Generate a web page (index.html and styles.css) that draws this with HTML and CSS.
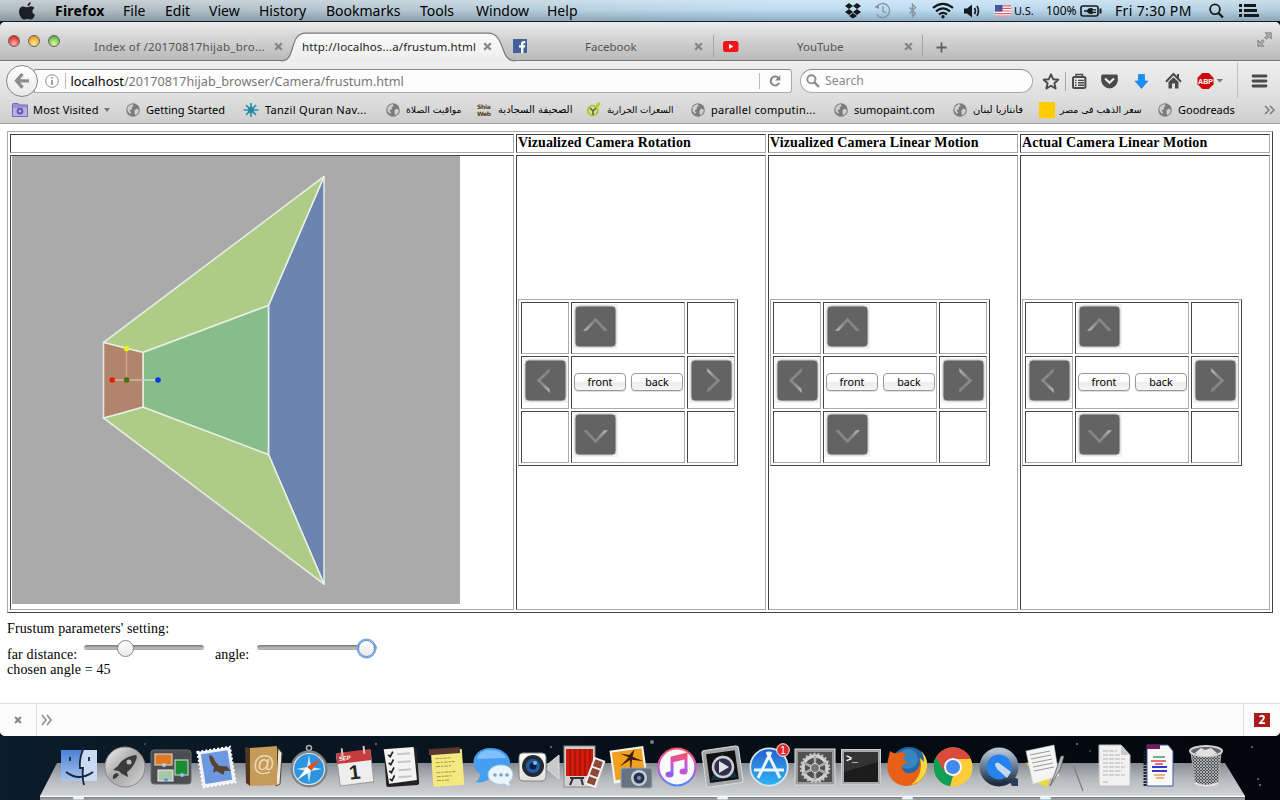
FILE: index.html
```html
<!DOCTYPE html>
<html lang="en">
<head>
<meta charset="utf-8">
<title>Frustum</title>
<link rel="stylesheet" href="styles.css">
</head>
<body>
<svg class="sprite" width="0" height="0">
  <defs>
    <linearGradient id="chev" x1="0" y1="1" x2="1" y2="0"><stop offset="0" stop-color="#b5b5b5"/><stop offset=".5" stop-color="#858585"/><stop offset="1" stop-color="#8f8f8f"/></linearGradient>
    <linearGradient id="silver" x1="0" y1="0" x2="1" y2="1"><stop offset="0" stop-color="#f4f4f4"/><stop offset=".5" stop-color="#a5a5a5"/><stop offset="1" stop-color="#dadada"/></linearGradient>
    <linearGradient id="blueV" x1="0" y1="0" x2="0" y2="1"><stop offset="0" stop-color="#2561cf"/><stop offset="1" stop-color="#30b4f5"/></linearGradient>
    <linearGradient id="paper" x1="0" y1="0" x2="0" y2="1"><stop offset="0" stop-color="#fff"/><stop offset="1" stop-color="#dedede"/></linearGradient>
  </defs>
  <symbol id="arrow" viewBox="0 0 45 45">
    <rect width="45" height="45" fill="#f2f2f2"/>
    <rect x="2" y="2" width="41" height="41" rx="4" fill="#636363" stroke="#c9c9c9" stroke-width="1"/>
    <path d="M10 26.7 L22.5 13.7 L35 26.7 H31 L22.5 17.6 L14 26.7Z" fill="url(#chev)"/>
  </symbol>
  <symbol id="x" viewBox="0 0 9 9"><path d="M1.2 1.2 L7.8 7.8 M7.8 1.2 L1.2 7.8" stroke="#858585" stroke-width="2.3"/></symbol>
  <symbol id="globe" viewBox="0 0 14 14"><circle cx="7" cy="7" r="6.8" fill="#7c7c7c"/><path d="M1.5 4.5 Q3.5 1.5 6.5 1 L7.5 3 L5.5 4.5 L6 6 L3.5 7.5 L5 9.5 L4 11 L1.5 8Z M8.5 7.5 L10.5 5.5 L13 7 L12 10 L9.5 12.5 L8.5 10Z" fill="#cfcfcf"/></symbol>
</svg>

<header class="menubar">
  <svg class="apple" width="18" height="20" viewBox="0 0 18 20"><path d="M12.7 1 Q13 4 9.6 5.3 Q9.1 2.2 12.7 1 M9.2 6.2 C10.7 6.2 11.5 5.3 13 5.3 C14.6 5.3 15.8 6 16.4 7 C13.4 8.8 14 12.7 17 13.8 C16 16.5 14.5 18.6 12.9 18.6 C11.6 18.6 11 17.9 9.5 17.9 C8 17.9 7.3 18.6 6 18.6 C3.8 18.6 1 14.4 1 10.6 C1 7.1 3.2 5.4 5.3 5.4 C6.9 5.4 7.9 6.2 9.2 6.2Z" fill="#1b1f23"/></svg>
  <nav class="menus">
    <b class="m1">Firefox</b><span class="m2">File</span><span class="m3">Edit</span><span class="m4">View</span><span class="m5">History</span><span class="m6">Bookmarks</span><span class="m7">Tools</span><span class="m8">Window</span><span class="m9">Help</span>
  </nav>
  <svg class="status" width="168" height="22" viewBox="0 0 168 22">
    <path d="M5 3 L9 6 L5 9 L1 6Z M13 3 L17 6 L13 9 L9 6Z M5 9 L9 12 L5 15 L1 12Z M13 9 L17 12 L13 15 L9 12Z M9 13 L13 16 L9 18.5 L5 16Z" fill="#16191c"/>
    <g stroke="#8795a0" fill="none" stroke-width="1.4"><path d="M32.6 7 A7 7 0 1 1 32.5 14"/><path d="M30 7 L35 9 L35 4.5Z" fill="#8795a0" stroke="none"/><path d="M39 6 V11 L42.5 13"/><path d="M65.5 7.5 L71.5 13.5 L68.5 16.5 V4.5 L71.5 7.5 L65.5 13.5"/></g>
    <g stroke="#16191c" fill="none" stroke-width="2.2"><path d="M89 7.8 Q99 -.2 109 7.8"/><path d="M92 11.3 Q99 5.5 106 11.3"/><path d="M95 14.4 Q99 11.4 103 14.4"/></g><circle cx="99" cy="16.8" r="1.7" fill="#16191c"/>
    <path d="M120 8.5 H123 L128 4.5 V17.5 L123 13.5 H120Z" fill="#16191c"/><g stroke="#16191c" stroke-width="1.6" fill="none"><path d="M130.5 8 Q132.5 11 130.5 14 M133 6 Q136 11 133 16"/></g>
    <g transform="translate(151 5)"><rect width="16" height="11.5" fill="#fff"/><path d="M0 .8H16M0 3.4H16M0 6H16M0 8.6H16M0 11H16" stroke="#dc5b68" stroke-width="1.2"/><rect width="7.5" height="6.5" fill="#46569c"/></g>
  </svg>
  <span class="us">U.S.</span><span class="pct">100%</span>
  <svg class="battery" width="23" height="22" viewBox="0 0 23 22"><rect x="1" y="6" width="17" height="10" rx="2" fill="none" stroke="#16191c" stroke-width="1.6"/><path d="M19.5 8.5 H21.5 V13.5 H19.5Z M4 10.3 H7 Q8 8 11 8 H12.5 V9.3 H16 V10.5 H12.5 V11.7 H16 V13 H12.5 V14 H11 Q8 14 7 11.8 H4Z" fill="#16191c"/></svg>
  <span class="clock">Fri 7:30 PM</span>
  <svg class="spot" width="56" height="22" viewBox="0 0 56 22"><circle cx="7" cy="9.3" r="4.9" fill="none" stroke="#16191c" stroke-width="1.8"/><path d="M10.5 13 L15 17.5" stroke="#16191c" stroke-width="2.2"/><path d="M31 5.5H34M36 5.5H48M31 10.5H34M36 10.5H49M31 15.5H34M36 15.5H51" stroke="#16191c" stroke-width="3"/></svg>
</header>

<main class="window">
  <div class="tabs">
    <div class="lights"><i class="red"></i><i class="amber"></i><i class="green"></i></div>
    <div class="tab first"><span>Index of /20170817hijab_bro...</span><svg width="9" height="9"><use href="#x"/></svg></div>
    <div class="tab active">
      <svg class="shape" width="238" height="30" viewBox="0 0 238 30" preserveAspectRatio="none"><defs><linearGradient id="tg" x1="0" y1="0" x2="0" y2="1"><stop offset="0" stop-color="#fbfbfb"/><stop offset="1" stop-color="#ececec"/></linearGradient></defs><path d="M4 30 V29.2 C20 29 11 1.2 29 1.2 H211 C229 1.2 222 29 238 29.2 V30Z" fill="url(#tg)"/><path d="M4 29 C20 29 11 1.2 29 1.2 H211 C229 1.2 222 29 238 29" fill="none" stroke="#7a7a7a" stroke-width="1.2"/></svg>
      <span>http://localhos...a/frustum.html</span><svg class="close" width="9" height="9"><use href="#x"/></svg>
    </div>
    <div class="tab fb"><svg width="14" height="14" viewBox="0 0 14 14"><rect width="14" height="14" fill="#43609c"/><path d="M8 14V8.5H6V6.2H8V4.8Q8 2 10.8 2H12.3V4.2H11.2Q10.4 4.2 10.4 5V6.2H12.3L12 8.5H10.4V14Z" fill="#fff"/></svg><span>Facebook</span><svg width="9" height="9"><use href="#x"/></svg></div>
    <div class="tab yt"><svg width="16" height="11" viewBox="0 0 16 11"><rect width="15.5" height="11" rx="2.5" fill="#f8131b"/><path d="M6 3 L10.5 5.5 L6 8Z" fill="#fff"/></svg><span>YouTube</span><svg width="9" height="9"><use href="#x"/></svg></div>
    <div class="plus"><svg width="11" height="11"><path d="M5.5 .5V10.5M.5 5.5H10.5" stroke="#626262" stroke-width="1.8"/></svg></div>
    <svg class="full" width="15" height="15" viewBox="0 0 15 15"><path d="M8 .8H14.3V7L12 4.8L9.3 7.3L7.5 5.6L10.3 3ZM.8 8V14.3H7L4.8 12L7.3 9.3L5.6 7.5L3 10.3Z" fill="#a9a9a9" stroke="#777" stroke-width=".7"/></svg>
  </div>

  <div class="nav">
    <div class="back"><svg width="16" height="16" viewBox="0 0 16 16"><path d="M8.5 1 L2.5 7.8 L8.5 14.6 M3 7.8 H15" fill="none" stroke="#8d8d8d" stroke-width="3.3"/></svg></div>
    <div class="url">
      <svg width="14" height="14" viewBox="0 0 14 14"><circle cx="7" cy="7" r="6.3" fill="none" stroke="#8c8c8c"/><path d="M7 3V4.6M7 6V11" stroke="#808080" stroke-width="1.5"/></svg>
      <i class="rule"></i><span class="addr"><em>localhost</em>/20170817hijab_browser/Camera/frustum.html</span>
      <i class="rule"></i><svg class="reload" width="12" height="12" viewBox="0 0 12 12"><path d="M9.4 3 A4.4 4.4 0 1 0 10.2 7.8" fill="none" stroke="#858585" stroke-width="2"/><path d="M11.3 .2V5.4H6Z" fill="#858585"/></svg>
    </div>
    <div class="search"><svg width="14" height="14" viewBox="0 0 14 14"><circle cx="5.4" cy="5.3" r="4.1" fill="none" stroke="#8c8c8c" stroke-width="1.9"/><path d="M8.3 8.3 L13 13" stroke="#8c8c8c" stroke-width="2.4"/></svg><span>Search</span></div>
    <svg class="tools" width="238" height="38" viewBox="0 0 238 38">
      <path d="M9 12.3 L11.2 17.2 L16.3 17.7 L12.4 21.2 L13.6 26.5 L9 23.8 L4.4 26.5 L5.6 21.2 L1.7 17.7 L6.8 17.2Z" fill="none" stroke="#4a4a4a" stroke-width="1.9" stroke-linejoin="round"/>
      <path d="M23.5 10V29" stroke="#aaa"/>
      <rect x="31" y="15" width="12.4" height="11" rx="1.5" fill="none" stroke="#4a4a4a" stroke-width="2"/><path d="M34 14V12.5H40.5V14M33 18.4H34.5M36 18.4H42M33 20.8H34.5M36 20.8H42M33 23.2H34.5M36 23.2H42" fill="none" stroke="#4a4a4a" stroke-width="1.4"/>
      <path d="M60.5 12.5H74.5Q75.8 12.5 75.8 14V19Q74.5 25.5 67.6 26.5Q60.5 25.5 59.2 19V14Q59.2 12.5 60.5 12.5Z" fill="#4a4a4a"/><path d="M63 16.5L67.5 20.7L72 16.5" stroke="#eee" fill="none" stroke-width="2.1"/>
      <path d="M96.5 12.5H102.5V19H106L99.5 26.5L93 19H96.5Z" fill="#1791f5" stroke="#0873d5" stroke-width=".6"/>
      <path d="M124 19.8L131.5 12L139 19.8" fill="none" stroke="#4a4a4a" stroke-width="2"/><path d="M126.5 20L131.5 15.2L136.5 20V26.5H133V21.5H130V26.5H126.5ZM135 12H137V16H135Z" fill="#4a4a4a"/>
      <path d="M160.2 11H166.8L171.5 15.7V22.3L166.8 27H160.2L155.5 22.3V15.7Z" fill="#cc0808"/><text x="163.5" y="21.8" text-anchor="middle" class="abp">ABP</text>
      <path d="M174.5 17H181L177.8 20.6Z" fill="#777"/><path d="M195.5 0V36" stroke="#c2c2c2"/>
      <path d="M211 14H224M211 19H224M211 24H224" stroke="#4a4a4a" stroke-width="2.8" stroke-linecap="round"/>
    </svg>
  </div>

  <div class="bookmarks">
    <span class="bm b1"><svg width="16" height="14" viewBox="0 0 16 14"><path d="M.5 13.5V1.5Q.5.5 1.5.5H6L7 2H15.5V13.5Z" fill="#9c93d4" stroke="#7167b4"/><path d="M1 5H15V13H1Z" fill="#b9b2e6"/><circle cx="8" cy="8.2" r="2.4" fill="none" stroke="#6459ac" stroke-width="2"/></svg><span>Most Visited</span><i></i></span>
    <span class="bm b2"><svg width="14" height="14"><use href="#globe"/></svg><span>Getting Started</span></span>
    <span class="bm b3"><svg width="16" height="14" viewBox="0 0 16 14"><path d="M8 0V14M.5 7H15.5M3 2.2L13 11.8M13 2.2L3 11.8" stroke="#2e91ae" stroke-width="1.7"/><circle cx="8" cy="7" r="3.1" fill="#2788a6"/></svg><span>Tanzil Quran Nav...</span></span>
    <span class="bm b4"><svg width="14" height="14"><use href="#globe"/></svg><span class="ar">مواقيت الصلاة</span></span>
    <span class="bm b5"><b class="shia">Shia<br>Web</b><span class="ar">الصحيفة السجادية</span></span>
    <span class="bm b6"><svg width="14" height="15" viewBox="0 0 14 15"><circle cx="5.8" cy="8.5" r="5" fill="#cfe09e" stroke="#a8c21e" stroke-width="1.6"/><path d="M9 5Q8 1 12.5 0Q14 3.5 10 5.5" fill="#b4d01d"/><path d="M6 13V9L3 6M6 9L9 6" stroke="#517035" stroke-width="1.6" fill="none"/></svg><span class="ar">السعرات الحرارية</span></span>
    <span class="bm b7"><svg width="14" height="14"><use href="#globe"/></svg><span>parallel computin...</span></span>
    <span class="bm b8"><svg width="14" height="14"><use href="#globe"/></svg><span>sumopaint.com</span></span>
    <span class="bm b9"><svg width="14" height="14"><use href="#globe"/></svg><span class="ar">فانتازيا لبنان</span></span>
    <span class="bm b10"><b class="gold"></b><span class="ar">سعر الذهب فى مصر</span></span>
    <span class="bm b11"><svg width="14" height="14"><use href="#globe"/></svg><span>Goodreads</span></span>
    <svg class="more" width="12" height="10"><path d="M1 1L5 5L1 9M6 1L10 5L6 9" fill="none" stroke="#7c7c7c" stroke-width="1.5"/></svg>
  </div>

  <section class="page">
    <div class="grid">
      <div class="cell"></div>
      <div class="cell th t1">Vizualized Camera Rotation</div>
      <div class="cell th t2">Vizualized Camera Linear Motion</div>
      <div class="cell th t3">Actual Camera Linear Motion</div>
      <div class="cell view">
        <svg width="448" height="448" viewBox="12 156 448 448">
          <rect x="12" y="156" width="448" height="448" fill="#aaa"/>
          <g stroke="#edf5ea" stroke-opacity=".85" stroke-width="1.6" stroke-linejoin="round">
            <path d="M324 176.5L268.5 305.5V454.5L324 584Z" fill="#6c84b0"/>
            <path d="M103.5 342.5L324 176.5L268.5 305.5L143 352.5Z" fill="#afcb88"/>
            <path d="M103.5 418L324 584L268.5 454.5L143 407Z" fill="#afcb88"/>
            <path d="M143 352.5L268.5 305.5V454.5L143 407Z" fill="#89bc8b"/>
            <path d="M103.5 342.5L143 352.5V407L103.5 418Z" fill="#b1846c"/>
          </g>
          <path d="M126.5 348V380" stroke="#cfa890" stroke-width="1.4"/><path d="M112 380H143" stroke="#d8b5a2" stroke-width="1.4"/><path d="M143 380H158" stroke="#bfe6bd" stroke-width="1.4"/>
          <circle cx="126.6" cy="348.6" r="2.8" fill="#f0ee1c"/><circle cx="112.2" cy="380" r="2.8" fill="#e81c05"/><circle cx="126.6" cy="380" r="2.8" fill="#4e6d10"/><circle cx="158" cy="380" r="2.8" fill="#0838e0"/>
        </svg>
      </div>
      <div class="cell mid"><div class="pad">
        <div></div><div class="up"><svg><use href="#arrow"/></svg></div><div></div>
        <div class="left"><svg><use href="#arrow"/></svg></div><div class="btns"><button>front</button><button>back</button></div><div class="right"><svg><use href="#arrow"/></svg></div>
        <div></div><div class="down"><svg><use href="#arrow"/></svg></div><div></div>
      </div></div>
      <div class="cell mid"><div class="pad">
        <div></div><div class="up"><svg><use href="#arrow"/></svg></div><div></div>
        <div class="left"><svg><use href="#arrow"/></svg></div><div class="btns"><button>front</button><button>back</button></div><div class="right"><svg><use href="#arrow"/></svg></div>
        <div></div><div class="down"><svg><use href="#arrow"/></svg></div><div></div>
      </div></div>
      <div class="cell mid"><div class="pad">
        <div></div><div class="up"><svg><use href="#arrow"/></svg></div><div></div>
        <div class="left"><svg><use href="#arrow"/></svg></div><div class="btns"><button>front</button><button>back</button></div><div class="right"><svg><use href="#arrow"/></svg></div>
        <div></div><div class="down"><svg><use href="#arrow"/></svg></div><div></div>
      </div></div>
    </div>
    <div class="setting">Frustum parameters' setting:</div>
    <div class="sliders">
      <label class="far">far distance:</label><span class="slider"><i class="s1"></i></span>
      <label class="ang">angle:</label><span class="slider"><i class="s2"></i></span>
    </div>
    <div class="chosen">chosen angle = 45</div>
  </section>

  <footer class="console">
    <div class="cx"><svg width="8" height="8"><use href="#x"/></svg></div>
    <svg class="prompt" width="12" height="12"><path d="M1 1L5 6L1 11M6 1L10 6L6 11" fill="none" stroke="#888" stroke-width="1.5"/></svg>
    <div class="errors"><b>2</b></div>
  </footer>
</main>

<footer class="dock">
  <svg class="shelf" width="1280" height="64" viewBox="0 736 1280 64">
    <defs><linearGradient id="sh" x1="0" y1="0" x2="0" y2="1"><stop offset="0" stop-color="#858b91"/><stop offset=".5" stop-color="#b7babd"/><stop offset="1" stop-color="#d2d3d5"/></linearGradient></defs>
    <g fill="#6f7e88"><circle cx="145" cy="744" r=".8"/><circle cx="376" cy="744" r="1"/><circle cx="551" cy="747" r="1"/><circle cx="652" cy="742" r="2"/><circle cx="1077" cy="744" r="1.1"/><circle cx="1090" cy="751" r=".8"/><circle cx="1252" cy="747" r="1"/><circle cx="1258" cy="779" r="1"/><circle cx="1260" cy="785" r="1.1"/></g>
    <path d="M57 763H1225L1245 796H40Z" fill="url(#sh)"/><path d="M40 797.5H1245V800H40Z" fill="#999da0"/><path d="M40 796.5H1245" stroke="#fff" stroke-width="1.5"/>
    <g fill="#e4f7ff"><rect x="73" y="797" width="11" height="2.5" rx="1"/><rect x="717" y="797" width="11" height="2.5" rx="1"/><rect x="902" y="797" width="11" height="2.5" rx="1"/><rect x="1040" y="797" width="11" height="2.5" rx="1"/></g>
    <path d="M1074 767L1083 791" stroke="#7c7c7c" stroke-width="1.3"/>
  </svg>
  <div class="icons">
    <svg viewBox="0 0 46 64"><defs><linearGradient id="fi" x1="0" y1="0" x2="0" y2="1"><stop offset="0" stop-color="#4a7fd6"/><stop offset="1" stop-color="#a9c7ef"/></linearGradient></defs><rect x="5" y="14" width="36" height="31" fill="url(#fi)"/><path d="M28 14H41V45H27L26 32H23Q24 22 28 14Z" fill="#c8dbf3"/><path d="M28 11Q23 22 24 32H27Q26 41 28 49M10 36Q23 46 37 36M14 21V25M33 21V25" fill="none" stroke="#18243a" stroke-width="1.8"/></svg>
    <svg viewBox="0 0 46 64"><circle cx="23" cy="31" r="20" fill="url(#silver)" stroke="#888"/><path d="M33 19Q36 19 34 24Q31 32 25 36L26 41L20 38L17 35L11 34L16 30Q21 21 33 19ZM15 37Q10 38 11 43Q15 42 17 39" fill="#3a3b3c"/><circle cx="27" cy="26" r="2.5" fill="#bbb"/></svg>
    <svg viewBox="0 0 46 64"><rect x="3" y="14" width="40" height="34" rx="3" fill="#4c4d50" stroke="#696a6e"/><rect x="7" y="18" width="17" height="11" fill="#e07a22" stroke="#ddd"/><rect x="27" y="24" width="13" height="15" fill="#198d32" stroke="#ddd"/><rect x="10" y="34" width="15" height="11" fill="#a6c8a6" stroke="#eee"/><circle cx="16" cy="29" r="2" fill="#b8cbe2"/><circle cx="34" cy="39" r="2" fill="#9ac0ef"/><circle cx="18" cy="44" r="2" fill="#589be0"/></svg>
    <svg viewBox="0 0 46 64"><g transform="rotate(-9 23 31)"><rect x="6" y="13" width="33" height="36" fill="#f2f2f2" stroke="#fff" stroke-width="2" stroke-dasharray="2 2"/><rect x="9" y="16" width="27" height="30" fill="#6b98df"/><path d="M17 18Q21 19 22 25L25 30L33 32L36 37L30 36L28 40L22 35L18 36L20 31Q16 25 17 18Z" fill="#594330"/></g></svg>
    <svg viewBox="0 0 46 64"><path d="M5 11L10 12V50L6 47Z" fill="#543720"/><path d="M38 12L42 17L40 48L36 50Z" fill="#eee9dd" stroke="#5d422c"/><path d="M10 12L37 10V49L10 50Z" fill="#c69a57"/><text x="24" y="35" text-anchor="middle" class="at">@</text></svg>
    <svg viewBox="0 0 46 64"><circle cx="23" cy="12" r="2.5" fill="none" stroke="#aaa" stroke-width="1.5"/><circle cx="23" cy="33" r="17" fill="#2c94df" stroke="#7f8488" stroke-width="3"/><circle cx="23" cy="33" r="15.5" fill="none" stroke="#dfe4e6" stroke-width="1.2"/><path d="M23 19L25 31L36 33L25 35L23 47L21 35L10 33L21 31Z" fill="#c6e8f8"/><path d="M35 22L25 35L21 31Z" fill="#ee4b19"/><path d="M11 44L21 31L25 35Z" fill="#fff"/></svg>
    <svg viewBox="0 0 46 64"><g transform="rotate(-7 23 31)"><rect x="6" y="16" width="34" height="32" fill="#eee" stroke="#999"/><rect x="6" y="15" width="34" height="11" fill="#c53c3e"/><text x="8" y="23" class="sep">SEP</text><text x="22" y="43" text-anchor="middle" class="one">1</text><path d="M12 11V19M34 11V19" stroke="#ccc" stroke-width="2"/></g></svg>
    <svg viewBox="0 0 46 64"><g transform="rotate(-4 23 31)"><rect x="7" y="13" width="33" height="37" rx="2" fill="#222"/><path d="M7 12H37L38 45L10 47Z" fill="#f3f3f3"/><path d="M11 18L13 20L16 15M11 26L13 28L16 23M11 34L13 36L16 31M11 42L13 44L16 39" fill="none" stroke="#222" stroke-width="1.7"/><path d="M20 18H33M20 26H33M20 34H33M20 41H33" stroke="#c5c5c5" stroke-width="2"/></g></svg>
    <svg viewBox="0 0 46 64"><g transform="rotate(-4 23 31)"><rect x="8" y="14" width="31" height="36" fill="#f3e980"/><rect x="6" y="12" width="31" height="6" fill="#5c3730"/><path d="M12 22H27M12 26H31M12 30H28M12 36H31M12 40H27M12 44H25" stroke="#a69a4c" stroke-width="1.1" stroke-dasharray="4 1 2 1"/></g></svg>
    <svg viewBox="0 0 46 64"><path d="M20 12C31 12 40 18 40 27C40 36 31 41 23 40Q15 48 5 46Q10 44 10 38C-3 28 5 12 20 12Z" fill="#459ef0"/><path d="M7 23Q9 14 20 14Q32 14 36 22Z" fill="#7fc1fa"/><path d="M31 29C38 29 43 33 43 39Q43 43 39 46L41 51Q37 50 34 48C25 50 18 44 18 39C18 33 24 29 31 29Z" fill="#eaf5fb" stroke="#a8c9de"/><g fill="#7ca3c5"><circle cx="25" cy="39" r="1.8"/><circle cx="31" cy="39" r="1.8"/><circle cx="37" cy="39" r="1.8"/></g></svg>
    <svg viewBox="0 0 46 64"><rect x="3" y="17" width="27" height="28" rx="4" fill="url(#paper)" stroke="#888"/><path d="M32 28L43 19V43L32 34Z" fill="#c9c9c9" stroke="#ddd"/><circle cx="17" cy="30" r="11" fill="#252a2e"/><circle cx="17" cy="30" r="7" fill="#1d5ca6"/><circle cx="17" cy="30" r="3.5" fill="#0a1f45"/><circle cx="19" cy="27" r="2" fill="#83b9e8"/></svg>
    <svg viewBox="0 0 46 64"><rect x="2" y="10" width="31" height="41" fill="#d2d2d2" stroke="#888"/><rect x="4" y="13" width="27" height="27" fill="#d31b0b"/><path d="M8 13V40M13 13V40M18 13V40M23 13V40M28 13V40" stroke="#98140b" stroke-width="1.4"/><path d="M8 42H22M11 42L8 49M19 42L21 49" stroke="#333" stroke-width="2"/><g transform="rotate(20 33 36)"><rect x="27" y="22" width="12" height="29" fill="#f2f2f2"/><path d="M29 24H37V31H29ZM29 33H37V40H29ZM29 42H37V49H29Z" fill="#8d4839"/></g></svg>
    <svg viewBox="0 0 46 64"><g transform="rotate(-8 23 31)"><rect x="4" y="12" width="34" height="33" fill="#f5f5f5"/><rect x="6" y="14" width="30" height="28" fill="#f3a11d"/><path d="M21 42L23 24L12 29L22 21L14 16L23 19L29 14L26 21L36 27L25 24Z" fill="#3d210b"/></g><rect x="13" y="32" width="31" height="20" rx="2" fill="#667381" stroke="#9da7b1"/><circle cx="31" cy="42" r="8" fill="#c7ced3"/><circle cx="31" cy="42" r="5.5" fill="#26344a"/><circle cx="31" cy="42" r="2" fill="#6f91be"/></svg>
    <svg viewBox="0 0 46 64"><defs><linearGradient id="it" x1="0" y1="0" x2="0" y2="1"><stop offset="0" stop-color="#fa5163"/><stop offset=".5" stop-color="#d351d8"/><stop offset="1" stop-color="#4d8cfa"/></linearGradient></defs><circle cx="23" cy="31" r="18.5" fill="#fafafa" stroke="url(#it)" stroke-width="2.2"/><path d="M18 38V22L32 18.5V35M18 25L32 21.5" fill="none" stroke="url(#it)" stroke-width="3"/><ellipse cx="15.5" cy="38.5" rx="4" ry="3" fill="#9a5cec"/><ellipse cx="29.5" cy="35.5" rx="4" ry="3" fill="#c253dc"/></svg>
    <svg viewBox="0 0 46 64"><g transform="rotate(-8 23 31)"><rect x="4" y="12" width="37" height="37" rx="3" fill="#a6a7a8" stroke="#ddd"/><rect x="8" y="16" width="29" height="29" fill="#111"/><path d="M9 43L24 17L36 43Z" fill="#194f70" opacity=".55"/></g><circle cx="23" cy="31" r="10" fill="#30314e" stroke="#cfcfd6" stroke-width="2.5"/><path d="M19 25L29 31L19 37Z" fill="#e5e5e8"/></svg>
    <svg viewBox="0 0 46 64"><circle cx="23" cy="31" r="18.7" fill="url(#blueV)" stroke="#dce5ec" stroke-width="1.8"/><path d="M25 16L12 42M21 16L34 42M8 34H38" fill="none" stroke="#e9f5fa" stroke-width="3"/><circle cx="37" cy="14" r="6.3" fill="#dc272b" stroke="#fff"/><text x="37" y="18" text-anchor="middle" class="badge">1</text></svg>
    <svg viewBox="0 0 46 64"><rect x="3" y="13" width="40" height="36" fill="#9b9b9b" stroke="#ddd"/><rect x="6" y="16" width="34" height="30" fill="#505050"/><circle cx="23" cy="32" r="12" fill="none" stroke="#d0d0d0" stroke-width="3.5"/><circle cx="23" cy="32" r="14" fill="none" stroke="#c5c5c5" stroke-width="2.5" stroke-dasharray="2 2"/><path d="M23 20V44M12 27L34 37M12 37L34 27" stroke="#aaa" stroke-width="2.5"/><circle cx="23" cy="32" r="4.5" fill="#777" stroke="#ddd"/></svg>
    <svg viewBox="0 0 46 64"><rect x="3.5" y="13.5" width="39" height="35" fill="#a9a9a9" stroke="#ccc"/><rect x="6" y="16" width="34" height="30" fill="#1c1c1c"/><path d="M6 16H40V26L6 36Z" fill="#333"/><text x="8" y="26" class="term">&gt;_</text></svg>
    <svg viewBox="0 0 46 64"><circle cx="25" cy="29" r="18" fill="#2367a8"/><circle cx="24" cy="23" r="10" fill="#3785bd"/><path d="M6 15Q10 18 13 17Q18 15 22 18L19 23L24 27Q18 27 18 32Q21 40 30 36Q38 31 35 22L41 27Q40 17 36 14Q46 23 42 36C38 47 29 50 22 50C8 49 1 37 4 24Z" fill="#e85f18"/><path d="M36 14Q46 23 42 36Q37 47 27 49Q40 39 36 22L40 26Q40 18 36 14Z" fill="#fad73d"/></svg>
    <svg viewBox="0 0 46 64"><circle cx="23" cy="31" r="19.5" fill="#fccd3b"/><path d="M6.1 21.3A19.5 19.5 0 0 1 41 23H23L14.5 36Z" fill="#db4b3d"/><path d="M6.1 21.3L15 36L23 40L20 50.3A19.5 19.5 0 0 1 6.1 21.3Z" fill="#129d58"/><circle cx="23" cy="31" r="9" fill="#f5f5f5"/><circle cx="23" cy="31" r="7" fill="#4589ef"/></svg>
    <svg viewBox="0 0 46 64"><defs><linearGradient id="qt" x1="0" y1="0" x2="0" y2="1"><stop offset="0" stop-color="#b4c2d2"/><stop offset=".5" stop-color="#64788f"/><stop offset="1" stop-color="#1f2d42"/></linearGradient></defs><path d="M30 38L42 43V50H36Z" fill="#293d58"/><circle cx="23" cy="31" r="16" fill="#2483ef" stroke="url(#qt)" stroke-width="7"/><path d="M19 29Q19 26 23 27L35 36L31 42L21 33Z" fill="#cad9e9"/></svg>
    <svg viewBox="0 0 46 64"><path d="M4 26L17 48L25 51L30 38Z" fill="#edda32"/><path d="M4 15L32 9L37 40L11 48Z" fill="#f4f4f4" stroke="#ccc" stroke-width=".5"/><path d="M8 19L28 15M9 23L29 19M10 27L30 23M11 31L31 27M12 35L32 31" stroke="#999"/><path d="M42 20L38 34L28 50L30 45L39 20Z" fill="#b9bbbc" stroke="#555" stroke-width=".7"/></svg>
    <i></i>
    <svg viewBox="0 0 46 64"><path d="M8 9H30L39 19V50H8Z" fill="#f1f1f1" stroke="#bbb"/><path d="M30 9V19H39Z" fill="#c9c9c9"/><path d="M12 15H26M12 19H29M12 23H34M12 27H32M12 31H34M12 35H31M12 39H34M12 46H18" stroke="#b5b5b5" stroke-dasharray="5 1"/></svg>
    <svg viewBox="0 0 46 64"><path d="M10 9H31L36 15V50H10Z" fill="#f8f8f8" stroke="#395fa1"/><rect x="10" y="9" width="13" height="4" fill="#7d185d"/><path d="M8 15V50" stroke="#222" stroke-width="3" stroke-dasharray="2 1"/><path d="M16 21H28" stroke="#3aa263" stroke-width="1.5"/><path d="M14 25H29M18 28H26" stroke="#d34a54" stroke-width="1.5"/><path d="M15 31H30M15 35H30" stroke="#3338d2" stroke-width="2"/><path d="M17 39H28M19 42H27" stroke="#e69c55" stroke-width="1.3"/></svg>
    <svg viewBox="0 0 46 64"><defs><pattern id="mesh" width="3" height="3" patternUnits="userSpaceOnUse"><rect width="3" height="3" fill="#4f5052"/><path d="M0 0L3 3M3 0L0 3" stroke="#bfc1c3" stroke-width=".8"/></pattern></defs><path d="M8 16L12 47Q23 54 35 47L38 16Z" fill="url(#mesh)" stroke="#aaa"/><ellipse cx="23" cy="15" rx="16" ry="5" fill="#666" stroke="#d5d6d8" stroke-width="2"/><path d="M12 17L18 12L22 14L28 12L34 17L27 20H18Z" fill="#e0e0e0"/><path d="M12 47Q23 53 35 47" fill="none" stroke="#e3e3e3" stroke-width="2"/></svg>
  </div>
</footer>
</body>
</html>
```

FILE: styles.css
```css
* { box-sizing: border-box; }
body { margin: 0; width: 1280px; height: 800px; overflow: hidden; background: #060d16; font-family: "Noto Sans", "Open Sans", sans-serif; color: #000; display: flex; flex-direction: column; }
svg { display: block; flex: none; }
.sprite { position: absolute; }

.menubar { flex: none; height: 22px; display: flex; align-items: center; padding-left: 18px; background: linear-gradient(rgba(255,255,255,.28), rgba(255,255,255,0) 45%, rgba(30,55,75,.28)), linear-gradient(90deg, #b1bbc1, #b6c9d5 35%, #bddcf2 60%, #bddcf2 75%, #b5cfdf); border-bottom: 1px solid #0f1b26; font-size: 14px; line-height: 21px; white-space: nowrap; }
.menus { flex: none; display: flex; margin-left: 19px; width: 789px; }
.menus > * { flex: none; }
.m1 { width: 68px; letter-spacing: .2px; } .m2 { width: 42px; } .m3 { width: 44px; } .m4 { width: 50px; } .m5 { width: 67px; } .m6 { width: 94px; } .m7 { width: 56px; } .m8 { width: 71px; }
.us { width: 32px; margin-left: 2px; font-size: 11px; }
.pct { width: 34px; font-size: 12px; }
.us, .pct, .clock { flex: none; }
.clock { width: 93px; margin-left: 12px; font-size: 14px; letter-spacing: .35px; }

.window { flex: none; height: 714px; display: flex; flex-direction: column; border-radius: 5px; overflow: hidden; background: #fff; }
.tabs { position: relative; flex: none; height: 39px; display: flex; align-items: flex-end; background: linear-gradient(#ececec, #d8d8d8 35%, #b9b9b9); border-bottom: 1px solid #777; font-size: 11.5px; color: #555; }
.lights { flex: none; display: flex; gap: 8px; width: 94px; padding: 0 0 13px 8px; }
.lights i { width: 12px; height: 12px; border-radius: 50%; border: 1px solid #666; }
.red { background: radial-gradient(circle at 50% 75%, #ffb2ae, #e8413f 60%, #b91c20); }
.amber { background: radial-gradient(circle at 50% 75%, #ffeb9c, #efaf38 60%, #bd7416); }
.green { background: radial-gradient(circle at 50% 75%, #d8fbac, #7dc352 60%, #44882d); }
.tab { flex: none; height: 28px; display: flex; align-items: center; white-space: nowrap; }
.first { width: 185px; }
.first span { width: 180px; flex: none; letter-spacing: .24px; }
.active { position: relative; width: 234px; margin-bottom: -1px; height: 29px; padding-left: 23px; color: #222; }
.active span { position: relative; width: 181px; flex: none; letter-spacing: .13px; }
.shape { position: absolute; left: -2px; top: 0; }
.close { position: relative; }
.fb { width: 200px; }
.fb span { width: 109px; margin: 0 0 0 58px; }
.yt { width: 209px; border-left: 1px solid #a5a5a5; padding-left: 9px; height: 22px; margin-bottom: 3px; }
.yt span { width: 107px; margin-left: 58px; }
.plus { flex: none; width: 30px; height: 22px; margin-bottom: 3px; border-left: 1px solid #a5a5a5; padding: 7px 0 0 13px; }
.full { margin: 0 0 13px 305px; }

.nav { flex: none; height: 38px; display: flex; align-items: center; padding-top: 1px; background: linear-gradient(#efefef, #dedede); font-size: 12.65px; }
.back { position: relative; z-index: 1; flex: none; margin-left: 6px; width: 32px; height: 32px; border-radius: 50%; border: 1px solid #858585; background: linear-gradient(#fff, #e8e8e8); display: flex; align-items: center; justify-content: center; }
.url { flex: none; width: 758px; height: 24px; margin-left: -4px; padding: 0 10px; background: #fdfdfd; border: 1px solid #aaa; border-top-color: #888; border-radius: 0 3px 3px 0; display: flex; align-items: center; }
.rule { width: 1px; height: 16px; background: #bbb; margin: 0 5px 0 6px; }
.url .rule:nth-of-type(2) { margin: 0 10px 0 0; }
.addr { flex: none; width: 688px; color: #777; white-space: nowrap; }
.addr em { color: #000; font-style: normal; }
.search { flex: none; width: 233px; height: 24px; margin-left: 8px; padding-left: 5px; display: flex; gap: 5px; align-items: center; color: #8a8a8a; background: #fdfdfd; border: 1px solid #aaa; border-top-color: #888; border-radius: 12px; font-size: 12.3px; }
.tools { margin-left: 9px; }
.abp { font: bold 7px "Liberation Sans", sans-serif; fill: #fff; }

.bookmarks { flex: none; height: 25px; display: flex; align-items: center; padding: 0 0 3px 12px; background: linear-gradient(#dedede, #cecece); border-bottom: 1px solid #a5a5a5; font-size: 11px; white-space: nowrap; }
.bm { flex: none; display: flex; align-items: center; gap: 6px; }
.bm i { border: 3.5px solid transparent; border-top: 4px solid #777; border-bottom: 0; }
.b1 { width: 114px; gap: 5px; letter-spacing: .2px; } .b2 { width: 117px; } .b3 { width: 143px; letter-spacing: .3px; } .b4 { width: 91px; } .b5 { width: 110px; } .b6 { width: 104px; } .b7 { width: 143px; letter-spacing: .27px; } .b8 { width: 119px; } .b9 { width: 86px; } .b10 { width: 119px; gap: 5px; } .b11 { width: 106px; }
.ar { font-family: "DejaVu Sans", sans-serif; font-size: 10px; direction: rtl; }
.b4 .ar { font-size: 9.3px; } .b6 .ar { font-size: 9px; } .b10 .ar { font-size: 9.4px; }
.shia { width: 15px; font: bold 6px/7px "DejaVu Sans", sans-serif; color: #54401b; letter-spacing: -.3px; }
.gold { width: 16px; height: 16px; background: #fc0; }

.page { flex: none; height: 579px; padding: 7px 7px 0; font: 14px/16px "Liberation Serif", serif; letter-spacing: .12px; background: #fff; }
.grid { height: 482px; padding: 2px; border: 1px solid; border-color: #aaa #444 #444 #aaa; display: grid; grid-template: 19px 455px / 504px 250px 250px 250px; gap: 2px; }
.cell { border: 1px solid; border-color: #444 #aaa #aaa #444; }
.th { font-weight: bold; padding-left: 1px; white-space: nowrap; }
.view { padding-left: 1px; }
.mid { display: flex; align-items: center; padding-left: 1px; }
.pad { width: 220px; height: 167px; padding: 2px; border: 1px solid; border-color: #aaa #444 #444 #aaa; display: grid; grid-template: 52px 53px 52px / 48px 114px 48px; gap: 2px; }
.pad > div { border: 1px solid; border-color: #444 #aaa #aaa #444; padding: 1px; }
.pad svg { width: 45px; height: 45px; }
.left svg { transform: rotate(-90deg); }
.right svg { transform: rotate(90deg); }
.down svg { transform: rotate(180deg); }
.pad .down { padding-top: 0; }
.pad .btns { display: flex; align-items: center; gap: 5px; padding: 0 0 2px 2px; }
.btns button { width: 52px; height: 18px; padding: 0; border: 1px solid #999; border-radius: 4px; background: linear-gradient(#fff 45%, #ececec 55%, #f6f6f6); box-shadow: 0 1px 1px #ddd; font: 10.7px/14px "Noto Sans", sans-serif; }
.setting { margin-top: 8px; }
.sliders { display: flex; height: 25px; padding-top: 10px; }
.far { width: 77px; } .ang { width: 42px; margin-left: 11px; letter-spacing: 0; }
.slider { width: 120px; height: 5px; margin-top: -2px; border-radius: 3px; background: linear-gradient(#777, #bbb 60%, #aaa); }
.slider i { display: block; width: 17px; height: 17px; margin-top: -5px; border-radius: 50%; border: 1px solid #858585; background: linear-gradient(#fff, #e9e9e9); }
.slider .s1 { margin-left: 33px; }
.slider .s2 { margin-left: 101px; border-color: #4688ca; box-shadow: 0 0 0 1.5px #7dabdb; }

.console { flex: none; height: 33px; display: flex; align-items: center; background: #fcfcfc; border-top: 1px solid #ddd; }
.cx { width: 37px; height: 32px; padding: 12px 0 0 14px; border-right: 1px solid #d9dce0; }
.prompt { margin-left: 4px; }
.errors { margin-left: auto; width: 37px; height: 32px; border-left: 1px solid #ddd; padding: 9px 0 0 10px; }
.errors b { display: block; width: 16px; height: 14px; background: #a81c1c; color: #fff; font: bold 12px/14px "Noto Sans", sans-serif; text-align: center; }

.dock { position: relative; flex: none; height: 64px; background: linear-gradient(90deg, #0b1c2a, #071019 50%, #03060c); }
.shelf { position: absolute; left: 0; top: 0; }
.icons { position: relative; display: flex; padding-left: 56px; height: 64px; }
.icons svg { width: 46px; height: 64px; }
.icons i { width: 23px; }
.at { font: 22px "Liberation Sans", sans-serif; fill: #ead8b6; }
.sep { font: bold 6px "Liberation Sans", sans-serif; fill: #fff; }
.one { font: bold 20px "Liberation Sans", sans-serif; fill: #222; }
.badge { font: 10px "Liberation Sans", sans-serif; fill: #fff; }
.term { font: bold 10px "Liberation Mono", monospace; fill: #fff; }
```
